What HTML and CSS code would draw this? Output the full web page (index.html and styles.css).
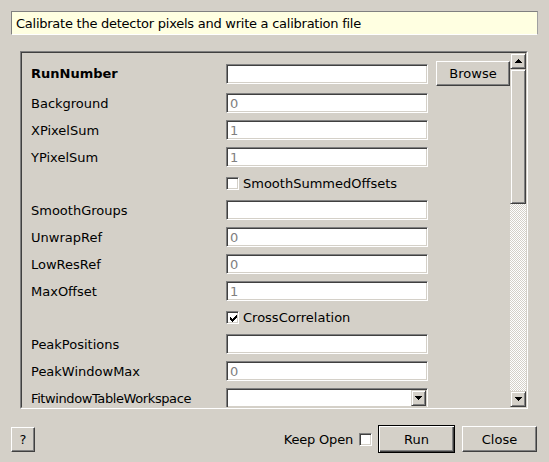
FILE: index.html
```html
<!DOCTYPE html>
<html>
<head>
<meta charset="utf-8">
<title>CalibrateRectangularDetectors</title>
<link rel="stylesheet" href="styles.css">
</head>
<body>
<div class="dialog">
  <div class="desc">Calibrate the detector pixels and write a calibration file</div>
  <div class="frame">
    <div class="frame-inner">
      <div class="viewport">
        <div class="form">
          <label class="lbl bold">RunNumber</label>
          <input class="field" type="text" value="">
          <button class="btn browse">Browse</button>

          <label class="lbl">Background</label>
          <input class="field dim" type="text" value="0">
          <span></span>

          <label class="lbl">XPixelSum</label>
          <input class="field dim" type="text" value="1">
          <span></span>

          <label class="lbl">YPixelSum</label>
          <input class="field dim" type="text" value="1">
          <span></span>

          <span></span>
          <div class="check-row"><span class="check"></span><span>SmoothSummedOffsets</span></div>

          <label class="lbl">SmoothGroups</label>
          <input class="field" type="text" value="">
          <span></span>

          <label class="lbl">UnwrapRef</label>
          <input class="field dim" type="text" value="0">
          <span></span>

          <label class="lbl">LowResRef</label>
          <input class="field dim" type="text" value="0">
          <span></span>

          <label class="lbl">MaxOffset</label>
          <input class="field dim" type="text" value="1">
          <span></span>

          <span></span>
          <div class="check-row"><span class="check checked"><svg width="7" height="7" viewBox="0 0 7 7" shape-rendering="crispEdges"><path d="M6 0h1v3h-1v1h-1v1h-1v1h-1v1h-1v-1h-1v-1h-1v-3h1v1h1v1h1v-1h1v-1h1z" fill="#000"/></svg></span><span>CrossCorrelation</span></div>

          <label class="lbl">PeakPositions</label>
          <input class="field" type="text" value="">
          <span></span>

          <label class="lbl">PeakWindowMax</label>
          <input class="field dim" type="text" value="0">
          <span></span>

          <label class="lbl tight">FitwindowTableWorkspace</label>
          <div class="combo"><span class="combo-btn"><svg width="7" height="4" viewBox="0 0 7 4" shape-rendering="crispEdges"><path d="M0 0h7v1h-1v1h-1v1h-1v1h-1v-1h-1v-1h-1v-1h-1z" fill="#000"/></svg></span></div>
          <span></span>
        </div>
      </div>
      <div class="vscroll">
        <div class="sbtn"><svg width="7" height="4" viewBox="0 0 7 4" shape-rendering="crispEdges"><path d="M3 0h1v1h1v1h1v1h1v1h-7v-1h1v-1h1v-1h1z" fill="#000"/></svg></div>
        <div class="slider"></div>
        <div class="groove"></div>
        <div class="sbtn"><svg width="7" height="4" viewBox="0 0 7 4" shape-rendering="crispEdges"><path d="M0 0h7v1h-1v1h-1v1h-1v1h-1v-1h-1v-1h-1v-1h-1z" fill="#000"/></svg></div>
      </div>
    </div>
  </div>
  <div class="buttons">
    <button class="btn help">?</button>
    <span class="spacer"></span>
    <span class="keep">Keep Open</span>
    <span class="check keep-check"></span>
    <button class="btn default run">Run</button>
    <button class="btn close">Close</button>
  </div>
</div>
</body>
</html>
```

FILE: styles.css
```css
html, body {
  margin: 0;
  padding: 0;
}
body {
  width: 549px;
  height: 462px;
  background: #d4d0c8;
  font-family: "DejaVu Sans", "Liberation Sans", sans-serif;
  font-size: 13px;
  color: #000;
  overflow: hidden;
}
.dialog {
  box-sizing: border-box;
  width: 549px;
  height: 462px;
  padding: 11px 11px 0 10px;
  display: flex;
  flex-direction: column;
}
.desc {
  box-sizing: border-box;
  height: 24px;
  margin-left: 1px;
  padding-left: 4px;
  line-height: 23px;
  letter-spacing: -0.25px;
  background: #ffffe1;
  border: 1px solid;
  border-color: #808080 #a0a0a0 #ffffff #808080;
  white-space: nowrap;
}
.frame {
  box-sizing: border-box;
  height: 358px;
  margin: 16px 10px 0 10px;
  border: 1px solid;
  border-color: #808080 #ffffff #ffffff #808080;
}
.frame-inner {
  box-sizing: border-box;
  height: 100%;
  border: 1px solid;
  border-color: #404040 #d4d0c8 #d4d0c8 #404040;
  display: flex;
}
.viewport {
  flex: 1;
  overflow: hidden;
}
.form {
  display: grid;
  grid-template-columns: 187px 202px 74px;
  column-gap: 8px;
  row-gap: 7px;
  padding: 8px 0 0 9px;
  align-items: center;
}
.lbl {
  white-space: nowrap;
}
.lbl.tight {
  letter-spacing: -0.4px;
}
.bold {
  font-weight: bold;
}
.field {
  box-sizing: border-box;
  width: 202px;
  height: 20px;
  margin: 0;
  padding: 0 3px;
  font: inherit;
  font-size: 13px;
  color: #000;
  background: #fff;
  border: 1px solid;
  border-color: #808080 #ffffff #ffffff #808080;
  box-shadow: inset 1px 1px #404040, inset -1px -1px #d4d0c8;
  outline: none;
}
.field.dim {
  color: #808080;
}
.btn {
  box-sizing: border-box;
  margin: 0;
  padding: 0;
  font: inherit;
  font-size: 13px;
  color: #000;
  background: #d4d0c8;
  border: 1px solid;
  border-color: #ffffff #404040 #404040 #ffffff;
  box-shadow: inset -1px -1px #808080;
}
.browse {
  width: 74px;
  height: 25px;
}
.check-row {
  grid-column: 2 / span 2;
  height: 19px;
  display: flex;
  align-items: center;
  gap: 4px;
  white-space: nowrap;
}
.check {
  box-sizing: border-box;
  width: 13px;
  height: 13px;
  flex: none;
  background: #fff;
  border: 1px solid;
  border-color: #808080 #ffffff #ffffff #808080;
  box-shadow: inset 1px 1px #404040, inset -1px -1px #d4d0c8;
  display: flex;
  align-items: center;
  justify-content: center;
}
.check svg {
  display: block;
  margin: 1px 0 0 1px;
}
.combo {
  box-sizing: border-box;
  width: 202px;
  height: 20px;
  background: #fff;
  border: 1px solid;
  border-color: #808080 #ffffff #ffffff #808080;
  box-shadow: inset 1px 1px #404040, inset -1px -1px #d4d0c8;
  padding: 2px 1px 2px 2px;
  display: flex;
  justify-content: flex-end;
}
.combo-btn, .sbtn {
  box-sizing: border-box;
  background: #d4d0c8;
  border: 1px solid;
  border-color: #d4d0c8 #404040 #404040 #d4d0c8;
  box-shadow: inset 1px 1px #ffffff, inset -1px -1px #808080;
  display: flex;
  align-items: center;
  justify-content: center;
}
.combo-btn {
  width: 15px;
  height: 16px;
  margin-top: -1px;
}
.vscroll {
  width: 16px;
  display: flex;
  flex-direction: column;
}
.sbtn {
  height: 16px;
  flex: none;
}
.sbtn svg, .combo-btn svg {
  display: block;
}
.slider {
  box-sizing: border-box;
  height: 135px;
  flex: none;
  background: #d4d0c8;
  border: 1px solid;
  border-color: #d4d0c8 #404040 #404040 #d4d0c8;
  box-shadow: inset 1px 1px #ffffff, inset -1px -1px #808080;
}
.groove {
  flex: 1;
  background-image: repeating-conic-gradient(#ffffff 0 25%, #d4d0c8 0 50%);
  background-size: 2px 2px;
}
.buttons {
  height: 28px;
  margin-top: 16px;
  display: flex;
  align-items: center;
}
.help {
  width: 24px;
  height: 25px;
  margin-left: 1px;
}
.spacer {
  flex: 1;
}
.keep {
  white-space: nowrap;
  letter-spacing: -0.2px;
  margin-right: 6px;
}
.keep-check {
  margin-right: 6px;
}
.run {
  width: 77px;
  height: 28px;
}
.btn.default {
  border: 1px solid #000;
  box-shadow: inset 1px 1px #ffffff, inset -1px -1px #404040, inset -2px -2px #808080;
}
.close {
  width: 75px;
  height: 26px;
  margin-left: 7px;
  margin-right: 1px;
}
```
